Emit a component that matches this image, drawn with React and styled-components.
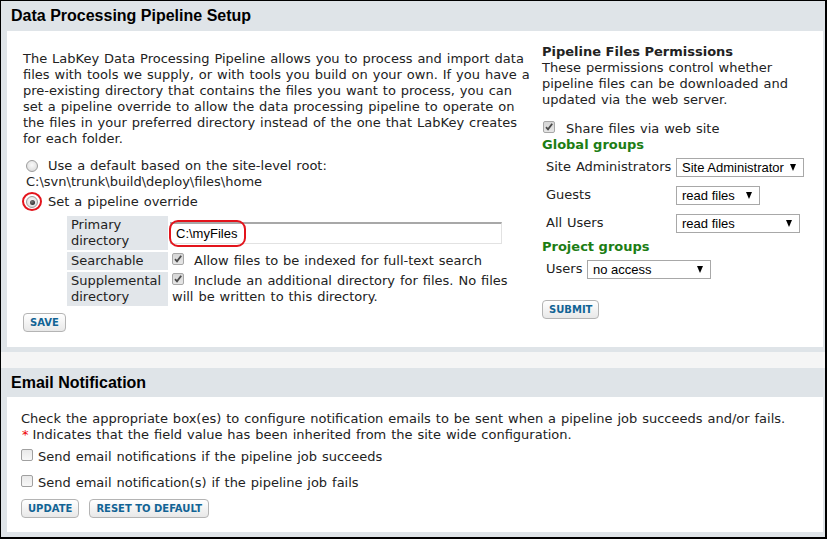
import React from 'react';
import styled, { createGlobalStyle } from 'styled-components';

const Global = createGlobalStyle`
  html, body { margin: 0; padding: 0; background: #fff; }
  body { font-family: "DejaVu Sans", Verdana, sans-serif; font-size: 13px; color: #222; word-spacing: 0.8px; }
  * { box-sizing: border-box; }
`;

const Frame = styled.div`
  width: 827px;
  height: 539px;
  border-style: solid;
  border-color: #000;
  border-width: 1px 2px 2px 1px;
  background: #f5f5f5;
  display: flex;
  flex-direction: column;
  overflow: hidden;
`;

const Panel = styled.section`
  background: #dfe4e8;
  padding: 0 2px 5px 6px;
  margin-top: ${(p) => p.$gap || 0}px;
`;

const PanelHeader = styled.h2`
  margin: 0;
  height: ${(p) => p.$h}px;
  display: flex;
  align-items: center;
  padding-left: 4px;
  font: bold 16px "Liberation Sans", Arial, sans-serif;
  word-spacing: 0;
  color: #000;
`;

const PanelBody = styled.div`
  background: #fff;
  height: ${(p) => p.$h}px;
`;

const SetupBody = styled(PanelBody)`
  display: flex;
  align-items: flex-start;
  padding: 13px 0 0 16px;
`;

const LeftCol = styled.div`
  width: 510px;
  line-height: 16px;
`;

const RightCol = styled.div`
  width: 272px;
  margin-left: 9px;
  line-height: 16px;
`;

const Intro = styled.p`
  margin: 7px 0 0;
  line-height: 16px;
  white-space: nowrap;
`;

const RadioRow = styled.div`
  display: flex;
  align-items: center;
  height: 16px;
  margin-top: ${(p) => p.$mt || 0}px;
  padding-left: 3px;
`;

const RadioWrap = styled.span`
  position: relative;
  display: inline-block;
  width: 12px;
  height: 12px;
  margin-right: 10px;
`;

const Radio = styled.span`
  display: block;
  width: 12px;
  height: 12px;
  border-radius: 50%;
  border: 1px solid #9c9c9c;
  background: radial-gradient(circle at 50% 40%, #fafafa 0%, #e4e4e4 60%, #cfcfcf 100%);
  position: relative;
  &::after {
    content: '';
    display: ${(p) => (p.$checked ? 'block' : 'none')};
    position: absolute;
    left: 2.5px;
    top: 2.5px;
    width: 5px;
    height: 5px;
    border-radius: 50%;
    background: radial-gradient(circle at 40% 35%, #777 0%, #333 70%);
  }
`;

const RingCircle = styled.span`
  position: absolute;
  left: -4px;
  top: -4px;
  width: 20px;
  height: 19px;
  border: 2px solid #e3141c;
  border-radius: 50%;
`;

const PathText = styled.div`
  line-height: 16px;
  color: #222;
  padding-left: 3px;
`;

const OverrideTable = styled.table`
  border-collapse: separate;
  border-spacing: 2px;
  margin: 4px 0 0 42px;
`;

const LabelCell = styled.td`
  background: #e2e6ea;
  width: 101px;
  padding: 1px 4px;
  vertical-align: middle;
  line-height: 16px;
`;

const ValueCell = styled.td`
  padding: 0;
  width: 332px;
  vertical-align: middle;
  line-height: 16px;
`;

const InputWrap = styled.div`
  position: relative;
  width: 332px;
`;

const TextInput = styled.div`
  height: 22px;
  width: 332px;
  border-top: 2px solid #a8a8a8;
  border-left: 1px solid #b0b0b0;
  border-right: 1px solid #e2e2e2;
  border-bottom: 1px solid #e2e2e2;
  padding-left: 5px;
  display: flex;
  align-items: center;
  font: 13px "Liberation Sans", Arial, sans-serif;
  word-spacing: 0;
  color: #000;
`;

const RingRect = styled.span`
  position: absolute;
  left: -1px;
  top: -2px;
  width: 77px;
  height: 27px;
  border: 2px solid #e3141c;
  border-radius: 9px;
`;

const CheckText = styled.div`
  padding-left: ${(p) => p.$pl || 0}px;
  white-space: nowrap;
  line-height: 16px;
  margin-top: ${(p) => p.$mt || 0}px;
`;

const CheckBox = styled.span`
  display: inline-block;
  vertical-align: baseline;
  width: 12px;
  height: 12px;
  margin-right: ${(p) => p.$gap}px;
  border: 1px solid ${(p) => (p.$checked ? '#a7a7a7' : '#a0a0a0')};
  border-radius: 2px;
  background: ${(p) =>
    p.$checked
      ? 'linear-gradient(#d6d6d6, #e6e6e6)'
      : 'linear-gradient(#e9e9e9, #f8f8f8)'};
  svg { display: block; }
`;

function Check({ checked, gap }) {
  return (
    <CheckBox $checked={checked} $gap={gap}>
      {checked && (
        <svg width="10" height="10" viewBox="0 0 10 10">
          <path d="M2 5.2 L4 7.3 L8.2 1.8" fill="none" stroke="#4a4a4a" strokeWidth="1.8" />
        </svg>
      )}
    </CheckBox>
  );
}

const ButtonRow = styled.div`
  display: flex;
  gap: ${(p) => p.$gap || 10}px;
  margin-top: ${(p) => p.$mt || 0}px;
`;

const Button = styled.button`
  height: 19px;
  padding: 0 6px;
  border: 1px solid #b4b4b4;
  border-radius: 4px;
  background: linear-gradient(#ffffff, #e8e8e8);
  color: #126495;
  font: bold 10px "DejaVu Sans", Verdana, sans-serif;
  word-spacing: 0;
  line-height: 17px;
  text-transform: uppercase;
  cursor: pointer;
`;

const SideTitle = styled.div`
  font-weight: bold;
  word-spacing: 0;
`;

const ShareRow = styled.div`
  margin-top: 13px;
  padding-left: 1px;
`;

const GroupHeading = styled.div`
  color: #1c7d14;
  font-weight: bold;
  word-spacing: 0;
  margin-top: ${(p) => p.$mt || 0}px;
`;

const PermGrid = styled.div`
  display: grid;
  grid-template-columns: ${(p) => p.$label}px auto;
  grid-auto-rows: 28px;
  align-items: center;
`;

const PermLabel = styled.span`
  padding-left: 4px;
`;

const Select = styled.div`
  width: ${(p) => p.$w}px;
  height: 19px;
  border: 1px solid #a8a8a8;
  background: #fff;
  display: flex;
  align-items: center;
  justify-content: space-between;
  padding: 0 7px 0 5px;
  font: 13px "Liberation Sans", Arial, sans-serif;
  word-spacing: 0;
  color: #000;
`;

const Arrow = styled.span`
  width: 0;
  height: 0;
  border-left: 3.5px solid transparent;
  border-right: 3.5px solid transparent;
  border-top: 7px solid #000;
`;

const EmailBody = styled(PanelBody)`
  padding: 14px 14px 0 14px;
  line-height: 16px;
`;

const Req = styled.span`
  color: #e00;
  margin-right: 4px;
  margin-left: 1px;
`;

function PermSelect({ w, value }) {
  return (
    <Select $w={w}>
      <span>{value}</span>
      <Arrow />
    </Select>
  );
}

export default function App() {
  return (
    <>
      <Global />
      <Frame>
        <Panel>
          <PanelHeader $h={30}>Data Processing Pipeline Setup</PanelHeader>
          <SetupBody $h={316}>
            <LeftCol>
              <Intro>
                The LabKey Data Processing Pipeline allows you to process and import data<br />
                files with tools we supply, or with tools you build on your own. If you have a<br />
                pre-existing directory that contains the files you want to process, you can<br />
                set a pipeline override to allow the data processing pipeline to operate on<br />
                the files in your preferred directory instead of the one that LabKey creates<br />
                for each folder.
              </Intro>
              <RadioRow $mt={11}>
                <RadioWrap>
                  <Radio />
                </RadioWrap>
                Use a default based on the site-level root:
              </RadioRow>
              <PathText>C:\svn\trunk\build\deploy\files\home</PathText>
              <RadioRow $mt={4}>
                <RadioWrap>
                  <Radio $checked />
                  <RingCircle />
                </RadioWrap>
                Set a pipeline override
              </RadioRow>
              <OverrideTable>
                <tbody>
                  <tr>
                    <LabelCell>
                      Primary
                      <br />
                      directory
                    </LabelCell>
                    <ValueCell>
                      <InputWrap>
                        <TextInput>C:\myFiles</TextInput>
                        <RingRect />
                      </InputWrap>
                    </ValueCell>
                  </tr>
                  <tr>
                    <LabelCell>Searchable</LabelCell>
                    <ValueCell>
                      <CheckText $pl={2}>
                        <Check checked gap={10} />
                        Allow files to be indexed for full-text search
                      </CheckText>
                    </ValueCell>
                  </tr>
                  <tr>
                    <LabelCell>
                      Supplemental
                      <br />
                      directory
                    </LabelCell>
                    <ValueCell>
                      <CheckText $pl={2}>
                        <Check checked gap={10} />
                        Include an additional directory for files. No files
                        <br />
                        will be written to this directory.
                      </CheckText>
                    </ValueCell>
                  </tr>
                </tbody>
              </OverrideTable>
              <ButtonRow $mt={5}>
                <Button>Save</Button>
              </ButtonRow>
            </LeftCol>
            <RightCol>
              <SideTitle>Pipeline Files Permissions</SideTitle>
              <div>
                These permissions control whether
                <br />
                pipeline files can be downloaded and
                <br />
                updated via the web server.
              </div>
              <ShareRow>
                <Check checked gap={11} />
                Share files via web site
              </ShareRow>
              <GroupHeading>Global groups</GroupHeading>
              <PermGrid $label={134}>
                <PermLabel>Site Administrators</PermLabel>
                <PermSelect w={128} value="Site Administrator" />
                <PermLabel>Guests</PermLabel>
                <PermSelect w={84} value="read files" />
                <PermLabel>All Users</PermLabel>
                <PermSelect w={124} value="read files" />
              </PermGrid>
              <GroupHeading $mt={2}>Project groups</GroupHeading>
              <PermGrid $label={45}>
                <PermLabel>Users</PermLabel>
                <PermSelect w={124} value="no access" />
              </PermGrid>
              <ButtonRow $mt={17}>
                <Button>Submit</Button>
              </ButtonRow>
            </RightCol>
          </SetupBody>
        </Panel>
        <Panel $gap={16}>
          <PanelHeader $h={29}>Email Notification</PanelHeader>
          <EmailBody $h={135}>
            <div>
              Check the appropriate box(es) to configure notification emails to be sent when a pipeline job succeeds and/or fails.
            </div>
            <div>
              <Req>*</Req>Indicates that the field value has been inherited from the site wide configuration.
            </div>
            <CheckText $mt={6}>
              <Check gap={5} />
              Send email notifications if the pipeline job succeeds
            </CheckText>
            <CheckText $mt={10}>
              <Check gap={5} />
              Send email notification(s) if the pipeline job fails
            </CheckText>
            <ButtonRow $mt={8} $gap={10}>
              <Button>Update</Button>
              <Button>Reset to Default</Button>
            </ButtonRow>
          </EmailBody>
        </Panel>
      </Frame>
    </>
  );
}
